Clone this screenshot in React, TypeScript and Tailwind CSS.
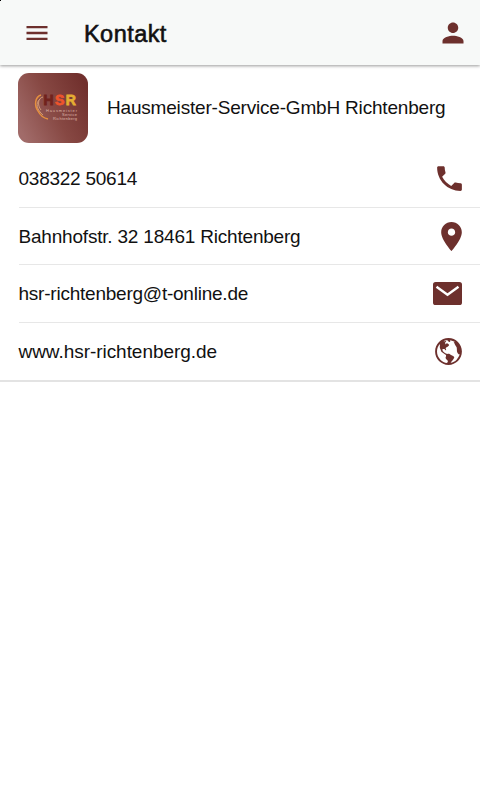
import React from "react";
import { IoMdMenu, IoMdPerson, IoMdCall, IoMdPin, IoMdGlobe } from "react-icons/io";

function MailIcon({ className }: { className?: string }) {
  return (
    <svg viewBox="0 0 29 23" className={className} fill="none">
      <rect width="29" height="23" rx="2.6" fill="currentColor" />
      <path d="M3.5 4.8L14.5 12.8L25.5 4.8" stroke="white" strokeWidth="2.4" />
    </svg>
  );
}

const contacts = [
  { text: "038322 50614", Icon: IoMdCall, spacing: "tracking-[-0.25px]", icon: "size-[33px] -mr-1" },
  { text: "Bahnhofstr. 32 18461 Richtenberg", Icon: IoMdPin, spacing: "tracking-[-0.2px] pt-px", icon: "size-[33px] -mr-[6px]" },
  { text: "hsr-richtenberg@t-online.de", Icon: MailIcon, spacing: "tracking-[-0.23px]", icon: "h-[23px] w-[29px]" },
  { text: "www.hsr-richtenberg.de", Icon: IoMdGlobe, spacing: "tracking-[-0.05px]", icon: "size-[33px] -mr-[3px] -mt-px" },
];

function Logo() {
  return (
    <svg viewBox="0 0 70 70" className="h-[70px] w-[70px] shrink-0 rounded-[11px]" fontFamily="Liberation Sans, sans-serif">
      <defs>
        <linearGradient id="maroon" x1="0" y1="0.75" x2="1" y2="0.25">
          <stop offset="0" stopColor="#a16b69" />
          <stop offset="0.5" stopColor="#874843" />
          <stop offset="1" stopColor="#71302d" />
        </linearGradient>
      </defs>
      <rect width="70" height="70" fill="url(#maroon)" />
      <path d="M23 22C17 24 16 32 20 38C22 42 25 45 30 46" fill="none" stroke="#e58f3e" strokeWidth="1.5" />
      <path d="M25 24C20 25 19 32 23 37M22 26C17 30 19 37 25 42" fill="none" stroke="#d8a079" strokeWidth="0.9" />
      <g fontWeight="bold" fontSize="14" strokeWidth="0.8">
        <text x="25.5" y="32.3" fill="#71221c" stroke="#71221c">H</text>
        <text x="37" y="32.3" fill="#ee542c" stroke="#ee542c">S</text>
        <text x="47.8" y="32.3" fill="#e5ad32" stroke="#e5ad32">R</text>
      </g>
      <g fill="#dfb5ac" fontSize="4" textAnchor="end">
        <text x="59" y="38.7" textLength="31">Hausmeister</text>
        <text x="59" y="43" textLength="15">Service</text>
        <text x="59" y="47.3" textLength="24">Richtenberg</text>
      </g>
    </svg>
  );
}

export default function App() {
  return (
    <div className="relative min-h-screen bg-white font-['Liberation_Sans',Arial,sans-serif] text-[19px] text-[#111]">
      <div className="absolute left-0 top-0 h-px w-px bg-black" />
      <header className="flex h-[65px] items-center bg-[#f7f9f8] pl-[23px] pr-[13px] shadow-[0_1px_3px_rgba(0,0,0,0.4)]">
        <IoMdMenu className="size-7 text-[#6d302d]" />
        <h1 className="ml-[33px] flex-1 pt-[4px] text-[23.5px] font-medium tracking-[0.45px] [-webkit-text-stroke:0.6px_#111]">Kontakt</h1>
        <IoMdPerson className="size-7 text-[#6d302d]" />
      </header>
      <main className="border-b-2 border-[#e3e3e3]">
        <div className="flex h-[85px] items-center gap-[19px] pl-[18px]">
          <Logo />
          <span className="whitespace-nowrap pt-[2px] tracking-[-0.19px]">Hausmeister-Service-GmbH Richtenberg</span>
        </div>
        <div className="ml-[18.5px]">
          {contacts.map(({ text, Icon, spacing, icon }) => (
            <div key={text} className="flex h-[57.5px] items-center justify-between border-b border-[#e7e7e7] pr-[18px] pt-px last:border-b-0">
              <span className={spacing}>{text}</span>
              <Icon className={`${icon} text-[#6d302d]`} />
            </div>
          ))}
        </div>
      </main>
    </div>
  );
}
